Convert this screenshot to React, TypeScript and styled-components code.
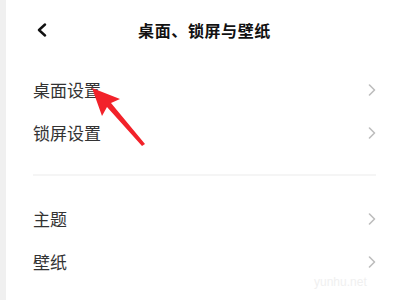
import React from "react";
import styled, { createGlobalStyle } from "styled-components";

const GlobalStyle = createGlobalStyle`
    html, body {
        margin: 0;
        padding: 0;
        background: #ffffff;
    }
    body {
        font-family: "Noto Sans CJK SC", "Noto Sans", sans-serif;
    }
`;

const Page = styled.div`
    position: relative;
    width: 400px;
    height: 300px;
    box-sizing: border-box;
    border-left: 6px solid #f0f0f0;
    background: #ffffff;
    overflow: hidden;
    display: flex;
    flex-direction: column;
`;

const Header = styled.div`
    height: 60px;
    display: grid;
    grid-template-columns: 1fr auto 1fr;
    align-items: center;
    padding: 0 30px;
`;

const Back = styled.div`
    display: flex;
    align-items: center;
    width: 16px;
    height: 16px;
`;

const Title = styled.div`
    font-size: 16px;
    font-weight: 700;
    color: #111111;
    letter-spacing: 0.6px;
    margin-left: 3px;
`;

const List = styled.div`
    padding: 8px 24px 0 27px;
    display: flex;
    flex-direction: column;
`;

const Row = styled.div`
    height: 43px;
    display: flex;
    align-items: center;
    justify-content: space-between;
    font-size: 17px;
    color: #333333;
`;

const Divider = styled.div`
    height: 2px;
    background: #f5f5f5;
    margin: 20px 0 21px;
`;

const Overlay = styled.svg`
    position: absolute;
    left: 0;
    top: 0;
    pointer-events: none;
`;

const Watermark = styled.div`
    position: absolute;
    left: 308px;
    top: 275px;
    font-family: "Liberation Sans", sans-serif;
    font-size: 12px;
    color: #f0f0f0;
`;

const Chevron = () => (
    <svg width="8" height="12" viewBox="0 0 8 12">
        <path d="M1.5 1 L6.5 6 L1.5 11" fill="none" stroke="#bdbdbd" strokeWidth="1.6" strokeLinecap="round" strokeLinejoin="round" />
    </svg>
);

const items = [["桌面设置", "锁屏设置"], ["主题", "壁纸"]];

const App = () => {
    return (
        <>
            <GlobalStyle />
            <Page>
                <Header>
                    <Back>
                        <svg width="12" height="14" viewBox="0 0 12 14">
                            <path d="M9 1.5 L3 7 L9 12.5" fill="none" stroke="#111" strokeWidth="2.4" strokeLinecap="round" strokeLinejoin="round" />
                        </svg>
                    </Back>
                    <Title>桌面、锁屏与壁纸</Title>
                    <div />
                </Header>
                <List>
                    {items.map((group, gi) => (
                        <React.Fragment key={gi}>
                            {gi > 0 && <Divider />}
                            {group.map((label) => (
                                <Row key={label}>
                                    <span>{label}</span>
                                    <Chevron />
                                </Row>
                            ))}
                        </React.Fragment>
                    ))}
                </List>
                <Overlay width="400" height="300" viewBox="0 0 400 300">
                    <polygon points="86,88 114,99 105,103 139,144 136,146 101,107 96,116" fill="#f2222a" />
                </Overlay>
                <Watermark>yunhu.net</Watermark>
            </Page>
        </>
    );
};

export default App;
